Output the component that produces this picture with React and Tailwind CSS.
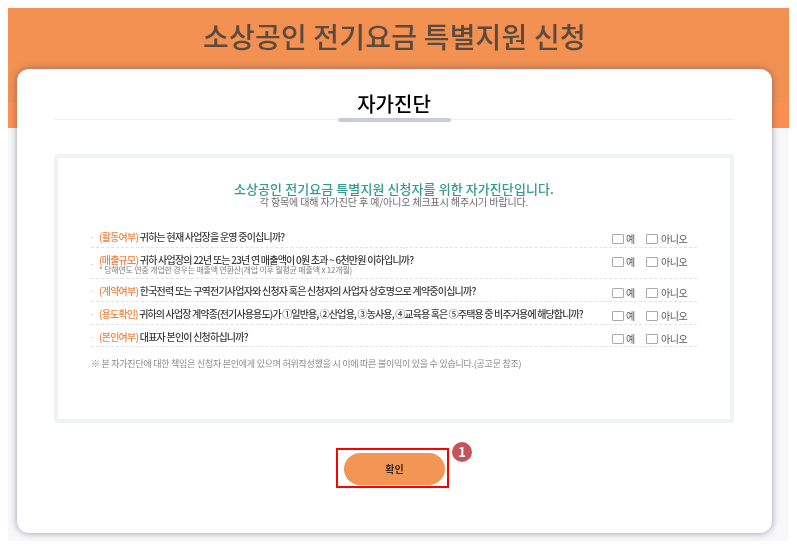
import React from "react";

const rows = [
  { tag: "(활동여부)", text: "귀하는 현재 사업장을 운영 중이십니까?", h: "h-[23px]", track: "tracking-[-0.78px]" },
  { tag: "(매출규모)", text: "귀하 사업장의 22년 또는 23년 연 매출액이 0원 초과 ~ 6천만원 이하입니까?", sub: "* 당해연도 연중 개업한 경우는 매출액 연환산(개업 이후 월평균 매출액 x 12개월)", h: "h-[31px]", track: "tracking-[-0.78px]" },
  { tag: "(계약여부)", text: "한국전력 또는 구역전기사업자와 신청자 혹은 신청자의 사업자 상호명으로 계약중이십니까?", h: "h-[23px]", track: "tracking-[-0.78px]" },
  { tag: "(용도확인)", text: "귀하의 사업장 계약종(전기사용용도)가 ①일반용, ②산업용, ③농사용, ④교육용 혹은 ⑤주택용 중 비주거용에 해당합니까?", h: "h-[23px]", track: "tracking-[-0.86px]" },
  { tag: "(본인여부)", text: "대표자 본인이 신청하십니까?", h: "h-[22px]", track: "tracking-[-0.78px]" },
];

function Box() {
  return <span className="block w-[12px] h-[10px] border border-[#a9a9a9] rounded-[1px] bg-white" />;
}

function Row({ tag, text, sub, h, track }) {
  return (
    <div className={`${h} flex items-start pt-[6px] border-b border-dashed border-[#e2e2e2]`}>
      <div className="flex-1 min-w-0 flex items-center whitespace-nowrap">
        <span className="w-[8px] text-[8px] leading-none text-[#bbbbbb]">-</span>
        <div>
          <p className={`text-[10px] leading-[11px] font-medium text-[#3a3a3a] ${track}`}>
            <span className="text-[#f0833f]">{tag}</span> {text}
          </p>
          {sub && <p className="text-[8px] leading-[9px] text-[#808080] tracking-[-0.2px]">{sub}</p>}
        </div>
      </div>
      <div className="flex items-center w-[85px] mt-[3px] text-[10px] leading-[10px] text-[#555] tracking-[-0.4px]">
        <Box />
        <span className="ml-[2px] w-[20px]">예</span>
        <Box />
        <span className="ml-[3px]">아니오</span>
      </div>
    </div>
  );
}

export default function App() {
  return (
    <div className="w-[797px] h-[547px] bg-white pt-2 pl-2 overflow-hidden font-['Noto_Sans_CJK_KR','Noto_Sans',sans-serif]">
      <div className="w-[781px] h-[533px] bg-[linear-gradient(#f29152_0,#f29152_95px,#fd8f52_95px,#fd8f52_120px,#f8f8fa_120px)] flex flex-col items-start pl-[9px] blur-[0.3px]">
        <h1 className="w-[755px] h-[61px] pt-[10px] text-center text-[28px] leading-[36px] font-medium text-[#5b4a3e] tracking-[0.2px]">소상공인 전기요금 특별지원 신청</h1>
        <div className="w-[755px] h-[464px] bg-white rounded-[12px] shadow-[0_0_7px_rgba(70,70,100,0.55)] px-[37px] flex flex-col items-start">
          <div className="w-[680px] h-[51px] pt-[21px] relative border-b border-[#eff1f6] text-center">
            <h2 className="text-[20px] leading-[28px] font-medium text-black tracking-[0px]">자가진단</h2>
            <span className="absolute left-[284px] bottom-[-3px] w-[113px] h-[4px] rounded-[2px] bg-[#c5ccd6]" />
          </div>
          <div className="w-[680px] h-[269px] mt-[34px] border-[4px] rounded-[3px] border-[#eff2f7] px-[33px] pt-[24px]">
            <p className="text-center text-[13px] leading-[14px] font-medium text-[#2f9c8f] tracking-[0.08px]">소상공인 전기요금 특별지원 신청자를 위한 자가진단입니다.</p>
            <p className="text-center text-[10px] leading-[11px] text-[#6e6e6e] tracking-[-0.12px]">각 항목에 대해 자가진단 후 예/아니오 체크표시 해주시기 바랍니다.</p>
            <div className="w-[606px] mt-[18px]">
              {rows.map((r) => <Row key={r.tag} {...r} />)}
            </div>
            <p className="mt-[11px] text-[9px] leading-[12px] text-[#8a8a8a] tracking-[-0.25px] whitespace-nowrap">※ 본 자가진단에 대한 책임은 신청자 본인에게 있으며 허위작성했을 시 이에 따른 불이익이 있을 수 있습니다.(공고문 참조)</p>
          </div>
          <div className="relative mt-[25px] ml-[282px] w-[113px] h-[40px] border-2 border-[#ff0000] flex items-center pl-[6px] pt-[1px]">
            <button className="w-[101px] h-[32px] rounded-full bg-[#f29555] text-[10px] font-bold text-[#3a2a20]">확인</button>
            <span className="absolute left-[114px] top-[-8px] w-[20px] h-[20px] rounded-full bg-[#c4545a] text-white text-[13px] font-bold leading-[20px] text-center">1</span>
          </div>
        </div>
      </div>
    </div>
  );
}
